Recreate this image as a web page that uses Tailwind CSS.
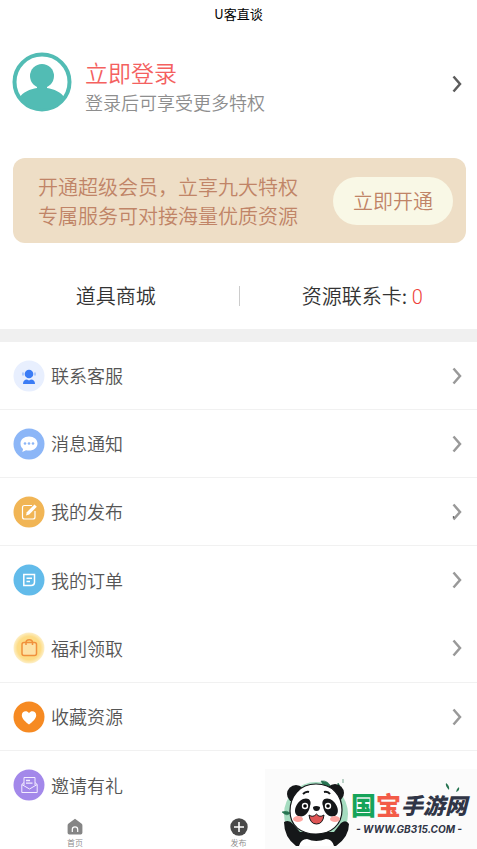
<!DOCTYPE html>
<html lang="zh-CN">
<head>
<meta charset="utf-8">
<meta name="viewport" content="width=device-width, initial-scale=1">
<title>U客直谈</title>
<script src="https://cdn.jsdelivr.net/npm/@tailwindcss/browser@4"></script>
</head>
<body class="relative h-screen overflow-hidden bg-white font-['Noto_Sans_CJK_SC',sans-serif] font-[350] text-[#555]">
<h1 class="h-7 text-center text-[13px] leading-7 font-normal text-black">U客直谈</h1>

<main>
  <a href="#login" class="flex items-start pt-6 pr-[14px] pl-3">
    <svg class="size-[60px] shrink-0" viewBox="0 0 60 60" aria-hidden="true">
      <circle cx="30" cy="30" r="27.500" fill="#fff" stroke="#52bcb4" stroke-width="4"/>
      <circle cx="30" cy="24" r="12" fill="#52bcb4"/>
      <path d="M25 33h10v3c7 1 14 4 18 10A29 29 0 0 1 7 46c4-6 11-9 18-10z" fill="#52bcb4"/>
    </svg>
    <span class="ml-[13px] flex flex-1 flex-col pt-1">
      <span class="text-[23px] leading-[32px] text-[#f4615f]">立即登录</span>
      <span class="text-[18px] leading-[28px] text-[#8e8e8e]">登录后可享受更多特权</span>
    </span>
    <svg class="h-5 w-3 self-center" viewBox="0 0 12 20" fill="none" stroke="#5c5c5c" stroke-width="2.500" aria-hidden="true"><path d="M2.500 2.500 9 10l-6.500 7.500"/></svg>
  </a>

  <section class="mr-[11px] ml-[13px] mt-[42px] flex h-[85px] items-center justify-between rounded-xl bg-[#eedec6] pr-[13px] pl-[25px] text-[20px] text-[#c08467]">
    <p class="leading-[29px] whitespace-nowrap">开通超级会员，立享九大特权<br>专属服务可对接海量优质资源</p>
    <button type="button" class="h-12 w-[120px] rounded-full bg-[#f9f8e6]">立即开通</button>
  </section>

  <nav class="mt-[33px] flex h-10 items-center pl-px text-[20px] text-[#333]">
    <a href="#mall" class="flex-1 pr-2 text-center">道具商城</a>
    <span class="h-5 w-px bg-[#ccc]"></span>
    <a href="#cards" class="flex-1 pl-2 text-center">资源联系卡: <span class="font-[Roboto,sans-serif] text-[#ee3f3a]">0</span></a>
  </nav>
  <div class="mt-[13px] h-[13px] bg-[#f0f0f0]"></div>

  <ul class="text-[18px]">
    <li><a href="#service" class="flex h-[68px] items-center gap-1.5 border-b border-[#f1f1f1] pr-[14px] pl-[13px]">
      <svg class="size-8" viewBox="0 0 32 32" aria-hidden="true"><circle cx="16" cy="16" r="15.500" fill="#e8effe"/><circle cx="16" cy="14" r="4.300" fill="#3b7cf5"/><path d="M10 12.500v3M22 12.500v3" stroke="#8fb5fa" stroke-width="1.300"/><path d="M10 24c0-3 1.500-4.500 4-4.500l2 1 2-1c2.500 0 4 1.500 4 4.500z" fill="#3b7cf5"/></svg>
      <span class="flex-1">联系客服</span>
      <svg class="h-5 w-3" viewBox="0 0 12 20" fill="none" stroke="#999" stroke-width="2.500" aria-hidden="true"><path d="M2.500 2.500 9 10l-6.500 7.500"/></svg>
    </a></li>
    <li><a href="#messages" class="flex h-[68px] items-center gap-1.5 border-b border-[#f1f1f1] pr-[14px] pl-[13px]">
      <svg class="size-8" viewBox="0 0 32 32" aria-hidden="true"><circle cx="16" cy="16" r="15.500" fill="#8cb6f7"/><path d="M16 8.500c-5 0-8.500 3-8.500 7 0 2.500 1 4.300 2.600 5.500l-.8 3 3.700-1.800c1 .3 2 .4 3 .4 5 0 8.500-3 8.500-7.100s-3.500-7-8.500-7z" fill="#fff"/><g fill="#8cb6f7"><circle cx="12" cy="15.500" r="1.300"/><circle cx="16" cy="15.500" r="1.300"/><circle cx="20" cy="15.500" r="1.300"/></g></svg>
      <span class="flex-1">消息通知</span>
      <svg class="h-5 w-3" viewBox="0 0 12 20" fill="none" stroke="#999" stroke-width="2.500" aria-hidden="true"><path d="M2.500 2.500 9 10l-6.500 7.500"/></svg>
    </a></li>
    <li><a href="#posts" class="flex h-[68px] items-center gap-1.5 border-b border-[#f1f1f1] pr-[14px] pl-[13px]">
      <svg class="size-8" viewBox="0 0 32 32" fill="none" aria-hidden="true"><circle cx="16" cy="16" r="15.500" fill="#f1b555"/><path d="M19 9.500h-7.500a2 2 0 0 0-2 2v9.500a2 2 0 0 0 2 2H20a2 2 0 0 0 2-2v-6" stroke="#fff" stroke-width="1.200"/><path d="m13 19.500.8-3.300 7.700-7.700 2.300 2.300-7.600 7.700z" fill="#fff"/></svg>
      <span class="flex-1">我的发布</span>
      <svg class="h-5 w-3" viewBox="0 0 12 20" fill="none" stroke="#999" stroke-width="2.500" aria-hidden="true"><path d="M2.500 2.500 9 10l-6.500 7.500"/><circle cx="2.500" cy="15" r=".8" fill="#222" stroke="none"/></svg>
    </a></li>
    <li><a href="#orders" class="flex h-[68px] items-center gap-1.5 pr-[14px] pl-[13px]">
      <svg class="size-8" viewBox="0 0 32 32" fill="none" stroke="#fff" stroke-width="1.500" aria-hidden="true"><circle cx="16" cy="16" r="15.500" fill="#62bbea" stroke="none"/><path d="M10.800 10.500h10.700v7.800c0 2.200-1 3.200-3.200 3.200h-7.500zM13.500 14.200h5.500M13.500 17.500h3.500"/></svg>
      <span class="flex-1">我的订单</span>
      <svg class="h-5 w-3" viewBox="0 0 12 20" fill="none" stroke="#999" stroke-width="2.500" aria-hidden="true"><path d="M2.500 2.500 9 10l-6.500 7.500"/></svg>
    </a></li>
    <li><a href="#welfare" class="flex h-[69px] items-center gap-1.5 border-b border-[#f1f1f1] pr-[14px] pl-[13px]">
      <svg class="size-8" viewBox="0 0 32 32" fill="none" aria-hidden="true"><defs><radialGradient id="glow"><stop offset=".75" stop-color="#fddc86"/><stop offset="1" stop-color="#fdefc8"/></radialGradient></defs><circle cx="16" cy="16" r="15.500" fill="url(#glow)"/><rect x="9" y="10.500" width="14.500" height="13" rx="2" fill="#fde2a6" stroke="#f0913c" stroke-width="1.500"/><path d="M13 13v-2.500c0-3.700 6.500-3.700 6.500 0V13" stroke="#f0913c" stroke-width="1.500"/></svg>
      <span class="flex-1">福利领取</span>
      <svg class="h-5 w-3" viewBox="0 0 12 20" fill="none" stroke="#999" stroke-width="2.500" aria-hidden="true"><path d="M2.500 2.500 9 10l-6.500 7.500"/></svg>
    </a></li>
    <li><a href="#favorites" class="flex h-[68px] items-center gap-1.5 border-b border-[#f1f1f1] pr-[14px] pl-[13px]">
      <svg class="size-8" viewBox="0 0 32 32" aria-hidden="true"><circle cx="16" cy="16" r="15.500" fill="#f68a22"/><path d="M16 23.500c-3.500-2.700-7.200-5.700-7.200-9.300 0-4 5-5.300 7.200-2 2.200-3.300 7.200-2 7.200 2 0 3.600-3.700 6.600-7.200 9.300z" fill="#fff"/></svg>
      <span class="flex-1">收藏资源</span>
      <svg class="h-5 w-3" viewBox="0 0 12 20" fill="none" stroke="#999" stroke-width="2.500" aria-hidden="true"><path d="M2.500 2.500 9 10l-6.500 7.500"/></svg>
    </a></li>
    <li><a href="#invite" class="flex h-[68px] items-center gap-1.5 pr-[14px] pl-[13px]">
      <svg class="size-8" viewBox="0 0 32 32" fill="none" stroke="#f3edff" aria-hidden="true"><circle cx="16" cy="16" r="15.500" fill="#a388ea" stroke="none"/><path d="M11 16V8.500h11V16M8.800 15.500l2.200-2M24.200 15.500l-2.200-2M8.800 15.500v8h15.400v-8L16.500 20z"/><path d="M13 11.500h4M13 14.200h6.500" stroke-width="1.300"/></svg>
      <span class="flex-1">邀请有礼</span>
    </a></li>
  </ul>
</main>

<nav class="absolute inset-x-0 bottom-0 grid h-[38px] grid-cols-[150px_1fr_150px] bg-white text-[8px] leading-[10px] text-[#888]">
  <a href="#home" class="flex flex-col items-center justify-end gap-0.5 pb-px">
    <svg class="size-[18px]" viewBox="0 0 18 18" fill="none" aria-hidden="true"><path d="M9 .8 2.600 5.500Q1.600 6.200 1.600 7.500v7.300q0 1.700 1.700 1.700h11.400q1.700 0 1.700-1.700V7.500q0-1.300-1-2z" fill="#858585"/><path d="M6.300 14v-2.500a2.700 2.700 0 0 1 5.400 0V14" stroke="#fff" stroke-width="1.200"/></svg>
    首页
  </a>
  <a href="#publish" class="flex flex-col items-center justify-end gap-0.5 pb-px">
    <svg class="size-[18px]" viewBox="0 0 18 18" aria-hidden="true"><circle cx="9" cy="9" r="8.700" fill="#494949"/><path d="M9 4v10M4 9h10" stroke="#fff" stroke-width="1.600"/></svg>
    发布
  </a>
</nav>

<aside class="absolute right-0 bottom-0 flex h-20 w-[212px] items-center bg-[#fbfbfb] pl-3">
  <svg class="size-[74px] shrink-0" viewBox="0 0 74 74" aria-hidden="true">
    <circle cx="39" cy="42" r="32" fill="#a5dcc0"/>
    <path d="M44 9q7-1 10 6-7 1-10-6zM5 40q5-2 8 1-3 4-8-1zM61 11q-1 3 2 3zM66 7v4" fill="#267451" stroke="#267451" stroke-width=".6"/>
    <path d="M7 50q5-3 9 2l7 8h34l7-9q5-4 8 1 0 13-13 22H19Q7 65 7 50z" fill="#151719"/>
    <path d="M22 74q2-7 8-7 9 4 19 0 6 0 8 7z" fill="#fff"/>
    <circle cx="19" cy="22" r="9" fill="#151719"/><circle cx="58" cy="21" r="9" fill="#151719"/>
    <path d="M39 12c17 0 26 12 26 26 0 15-11 24-26 24S13 54 13 39c0-14 9-27 26-27z" fill="#fff" stroke="#151719" stroke-width="1.200"/>
    <path d="M26 27c6-2 9 2 7 7-1 7-6 12-12 10-6-3-2-14 5-17zM53 27c-6-2-9 2-7 7 1 7 6 12 12 10 6-3 2-14-5-17z" fill="#151719"/>
    <path d="M26 22q3-3 6-2M47 20q4-1 6 2" fill="none" stroke="#151719" stroke-width="2"/>
    <circle cx="28" cy="34" r="3.200" fill="#fff"/><circle cx="51" cy="34" r="3.200" fill="#fff"/><circle cx="28" cy="34" r="1.800"/><circle cx="51" cy="34" r="1.800"/>
    <path d="M36 35q3-2 7 0 0 4-3.500 4T36 35z" fill="#151719"/>
    <path d="M32 43q4 3 7.500-1 3 4 7.500 1-1 9-7.500 9T32 43z" fill="#df5555" stroke="#151719"/>
    <ellipse cx="21" cy="47" rx="5" ry="3" fill="#ffa6a1"/><ellipse cx="58" cy="47" rx="5" ry="3" fill="#ffa6a1"/>
  </svg>
  <div class="flex flex-1 flex-col items-center pt-2 pr-3 italic">
    <div class="flex items-center font-black whitespace-nowrap text-[#303546]">
      <span class="text-[25px] leading-[32px] text-[#16a45a] not-italic">国</span>
      <span class="text-[25px] leading-[32px] text-[#f35b48] not-italic">宝</span>
      <span class="text-[22px] leading-[32px]">手游网</span>
    </div>
    <div class="font-[Inter,sans-serif] text-[10px] leading-[18px] font-bold whitespace-nowrap text-[#303546]">- WWW.GB315.COM -</div>
  </div>
  <svg class="absolute top-[14px] right-4 h-3 w-4" viewBox="0 0 16 12" aria-hidden="true"><path d="M1 0q4 3 3 7-4-4-3-7zM14 4q1 4-3 5 0-3 3-5zM7 6l2 2" fill="#267451"/></svg>
</aside>
</body>
</html>
